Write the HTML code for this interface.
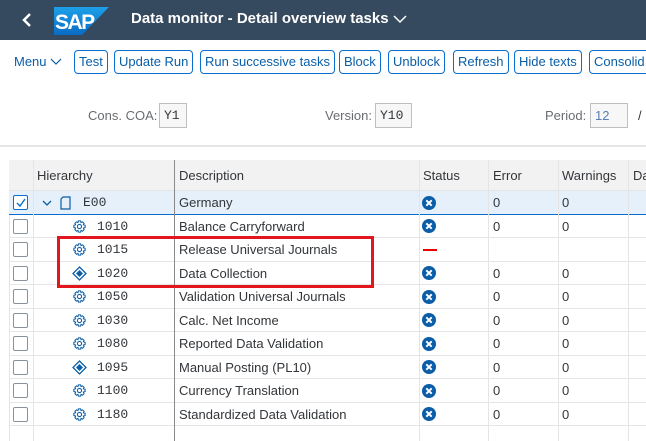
<!DOCTYPE html>
<html><head><meta charset="utf-8"><style>
*{margin:0;padding:0;box-sizing:border-box}
body{width:646px;height:441px;overflow:hidden;background:#fff;font-family:"Liberation Sans",sans-serif;position:relative;color:#32363a}
.hdr{position:absolute;left:0;top:0;width:646px;height:40px;background:#354a5f;color:#fff}
.btn{position:absolute;top:50px;height:24px;border:1px solid #0a6ed1;border-radius:4px;color:#0a5ea8;font-size:13px;line-height:22px;padding:0 4px;white-space:nowrap;background:#fff}
.lbl{position:absolute;top:108px;font-size:13px;color:#6a6d70}
.fld{position:absolute;top:103px;height:25px;border:1px solid #bfbfbf;background:#f7f7f7;font-family:"Liberation Mono",monospace;font-size:13px;line-height:23px;padding-left:4px;color:#32363a}
.tbl{position:absolute;left:9px;top:160px;width:637px;height:281px;border-left:1px solid #e5e5e5;border-top:1px solid #e5e5e5}
.row{position:absolute;left:9px;width:637px;border-bottom:1px solid #e5e5e5;font-size:13px}
.c{position:absolute;top:0;height:100%;display:flex;align-items:center}
.vl{position:absolute;top:160px;height:281px;width:1px;background:#e5e5e5}
.cb{position:absolute;left:4px;width:15px;height:15px;border:1px solid #89919a;border-radius:2px;background:#fff}
.code{font-family:"Liberation Mono",monospace;color:#32363a}
</style></head><body>
<div class="hdr">
<svg style="position:absolute;left:20px;top:11px" width="14" height="18"><path d="M10 3 L4 9 L10 15" stroke="#fff" stroke-width="2.5" fill="none"/></svg>
<svg style="position:absolute;left:54px;top:7px" width="56" height="28"><defs><linearGradient id="g" x1="0" y1="0" x2="0" y2="1"><stop offset="0" stop-color="#1ea0e8"/><stop offset="1" stop-color="#0a6bc4"/></linearGradient></defs><path d="M0 0 H55 L28 28 H0Z" fill="url(#g)"/><text x="1" y="22" font-family="Liberation Sans" font-weight="bold" font-size="21" fill="#fff" letter-spacing="-1.5">SAP</text></svg>
<div style="position:absolute;left:131px;top:10px;font-size:15px;font-weight:bold">Data monitor - Detail overview tasks</div>
<svg style="position:absolute;left:393px;top:14px" width="14" height="10"><path d="M1 2 L7 8 L13 2" stroke="#fff" stroke-width="1.5" fill="none"/></svg>
</div>
<div style="position:absolute;left:14px;top:54px;font-size:13px;color:#0a5ea8">Menu <svg width="12" height="8"><path d="M1 1 L6 6 L11 1" stroke="#0a5ea8" stroke-width="1.2" fill="none"/></svg></div>
<div class="btn" style="left:74px">Test</div>
<div class="btn" style="left:114px">Update Run</div>
<div class="btn" style="left:200px">Run successive tasks</div>
<div class="btn" style="left:339px">Block</div>
<div class="btn" style="left:388px">Unblock</div>
<div class="btn" style="left:453px">Refresh</div>
<div class="btn" style="left:514px">Hide texts</div>
<div class="btn" style="left:589px;width:70px">Consolid</div>
<div class="lbl" style="left:88px">Cons. COA:</div>
<div class="fld" style="left:159px;width:28px">Y1</div>
<div class="lbl" style="left:325px">Version:</div>
<div class="fld" style="left:375px;width:37px">Y10</div>
<div class="lbl" style="left:545px">Period:</div>
<div class="fld" style="left:590px;width:38px;font-family:'Liberation Sans',sans-serif;color:#5a7db5">12</div>
<div class="lbl" style="left:638px;color:#32363a">/</div>
<div style="position:absolute;left:0;top:145px;width:646px;height:2px;background:#e5e5e5"></div>
<div class="tbl"></div>
<div class="row" style="top:160px;height:31px;background:#f2f2f2;color:#32363a">
<div class="c" style="left:28px">Hierarchy</div><div class="c" style="left:170px">Description</div><div class="c" style="left:414px">Status</div><div class="c" style="left:484px">Error</div><div class="c" style="left:553px">Warnings</div><div class="c" style="left:624px">Da</div></div>
<div class="row" style="top:191px;height:24px;background:#e5f0fa;border-bottom:1px solid #0a6ed1">
<div class="cb" style="top:4px;border-color:#0a6ed1"><svg width="13" height="13" style="position:absolute;left:0;top:0"><path d="M3 7 L6 10 L11 3" stroke="#0a6ed1" stroke-width="1.4" fill="none"/></svg></div>
<div class="c" style="left:33px"><svg width="10" height="8"><path d="M1 2 L5 6 L9 2" stroke="#0a5ea8" stroke-width="1.3" fill="none"/></svg></div>
<div class="c" style="left:51px"><svg width="11" height="14"><path d="M3 1 H10 V13 H1 V3 Z" stroke="#0a5ea8" stroke-width="1.2" fill="none"/></svg></div>
<div class="c code" style="left:74px">E00</div><div class="c" style="left:170px">Germany</div>
<div class="c" style="left:413px"><svg width="14" height="14"><circle cx="7" cy="7" r="7" fill="#0a5ea8"/><path d="M4.3 4.3 L9.7 9.7 M9.7 4.3 L4.3 9.7" stroke="#fff" stroke-width="2"/></svg></div>
<div class="c" style="left:484px">0</div><div class="c" style="left:553px">0</div></div>
<div id="rows"></div>
<div class="vl" style="left:33px"></div>
<div class="vl" style="left:174px;background:#8a8a8a"></div>
<div class="vl" style="left:419px"></div>
<div class="vl" style="left:488px"></div>
<div class="vl" style="left:558px"></div>
<div class="vl" style="left:628px"></div>
<script>
var d=[["1010","Balance Carryforward","g",1],["1015","Release Universal Journals","g",2],["1020","Data Collection","d",1],["1050","Validation Universal Journals","g",1],["1030","Calc. Net Income","g",1],["1080","Reported Data Validation","g",1],["1095","Manual Posting (PL10)","d",1],["1100","Currency Translation","g",1],["1180","Standardized Data Validation","g",1]];
var tops=[215,238,262,285,309,332,356,379,403];
var gear='<svg width="15" height="15" viewBox="0 0 16 16"><path d="M8 1.5 L9.2 1.5 L9.6 3.3 L11.2 2.5 L12.9 4.1 L12.1 5.7 L14 6.2 L14 8.6 L12.1 9.2 L12.9 10.8 L11.2 12.5 L9.6 11.7 L9.2 13.5 L6.8 13.5 L6.4 11.7 L4.8 12.5 L3.1 10.8 L3.9 9.2 L2 8.6 L2 6.2 L3.9 5.7 L3.1 4.1 L4.8 2.5 L6.4 3.3 L6.8 1.5 Z" stroke="#0a5ea8" stroke-width="1.1" fill="none" transform="translate(0,0.5)"/><circle cx="8" cy="8" r="2.2" stroke="#0a5ea8" stroke-width="1.1" fill="none"/></svg>';
var dia='<svg width="15" height="15"><path d="M7.5 1 L14 7.5 L7.5 14 L1 7.5Z" stroke="#0a5ea8" stroke-width="1.3" fill="none"/><path d="M7.5 4 L11 7.5 L7.5 11 L4 7.5Z" fill="#0a5ea8"/></svg>';
var x='<svg width="14" height="14"><circle cx="7" cy="7" r="7" fill="#0a5ea8"/><path d="M4.3 4.3 L9.7 9.7 M9.7 4.3 L4.3 9.7" stroke="#fff" stroke-width="2"/></svg>';
var h='';
d.forEach(function(r,i){var t=tops[i];var ht=(i<8?tops[i+1]:426)-t;
h+='<div class="row" style="top:'+t+'px;height:'+ht+'px"><div class="cb" style="top:4px"></div><div class="c" style="left:63px">'+(r[2]=="g"?gear:dia)+'</div><div class="c code" style="left:88px">'+r[0]+'</div><div class="c" style="left:170px">'+r[1]+'</div>'+
(r[3]==1?'<div class="c" style="left:413px">'+x+'</div><div class="c" style="left:484px">0</div><div class="c" style="left:553px">0</div>':'<div class="c" style="left:414px"><div style="width:14px;height:2px;background:#e00"></div></div>')+'</div>';});
document.getElementById('rows').outerHTML=h;
</script>
<div style="position:absolute;left:57px;top:236px;width:317px;height:52px;border:3px solid #e3151f"></div>
</body></html>
